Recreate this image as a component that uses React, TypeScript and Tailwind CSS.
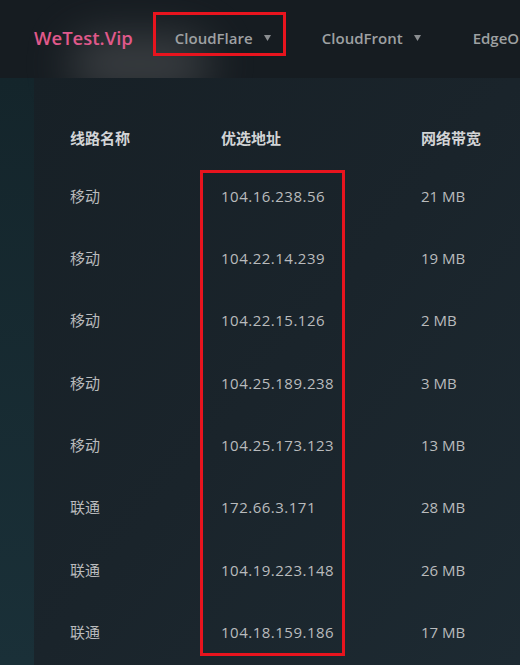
import * as React from 'react';

const rows = [
  { name: '移动', ip: '104.16.238.56', bw: '21 MB' },
  { name: '移动', ip: '104.22.14.239', bw: '19 MB' },
  { name: '移动', ip: '104.22.15.126', bw: '2 MB' },
  { name: '移动', ip: '104.25.189.238', bw: '3 MB' },
  { name: '移动', ip: '104.25.173.123', bw: '13 MB' },
  { name: '联通', ip: '172.66.3.171', bw: '28 MB' },
  { name: '联通', ip: '104.19.223.148', bw: '26 MB' },
  { name: '联通', ip: '104.18.159.186', bw: '17 MB' },
];

const Caret: React.FC = () => (
  <svg width="7" height="6" viewBox="0 0 7 6" className="ml-[11px] shrink-0">
    <path d="M0 0 L7 0 L3.5 6 Z" fill="#8a8d90" />
  </svg>
);

const App: React.FC = () => {
  return (
    <div
      className="w-[520px] h-[665px] overflow-hidden bg-[#161c21] text-[15px]"
      style={{ fontFamily: '"Open Sans", "Noto Sans CJK SC", sans-serif' }}
    >
      <header className="relative h-[78px] flex items-start whitespace-nowrap">
        <div className="absolute left-[70px] top-[36px] w-[140px] h-[56px] rounded-full bg-[#4a4d50] opacity-70 blur-[22px]" />
        <span className="relative shrink-0 ml-[34px] mt-[25px] leading-[26px] text-[18.5px] font-semibold text-[#e0598b]">
          WeTest.Vip
        </span>
        <div className="relative shrink-0 ml-[20px] mt-[12px] w-[133px] h-[44px] border-[3px] border-[#e8141e] flex items-center pl-[19px] pt-[8px]">
          <span className="font-semibold text-[#9ea0a2]">CloudFlare</span>
          <Caret />
        </div>
        <div className="relative shrink-0 ml-[36px] mt-[27px] h-[22px] flex items-center">
          <span className="font-semibold text-[#9ea0a2]">CloudFront</span>
          <Caret />
        </div>
        <span className="relative shrink-0 ml-[52px] mt-[27px] leading-[22px] font-semibold text-[#9ea0a2]">EdgeOne</span>
      </header>

      <div className="flex h-[587px]">
        <div className="w-[34px] shrink-0 bg-gradient-to-b from-[#14252b] to-[#1a3038]" />
        <div className="relative flex-1 bg-gradient-to-br from-[#172026] via-[#1a242b] to-[#1d2a32] pt-[33px] pl-[36px]">
          <div className="flex items-center h-[54px] font-bold text-[#d2d4d6]">
            <div className="w-[151px]">线路名称</div>
            <div className="w-[200px]">优选地址</div>
            <div>网络带宽</div>
          </div>
          {rows.map((r, i) => (
            <div key={i} className="flex items-center h-[62.3px] text-[#b9bbbd]">
              <div className="w-[151px]">{r.name}</div>
              <div className="w-[200px] tracking-[0.5px]">{r.ip}</div>
              <div>{r.bw}</div>
            </div>
          ))}
          <div className="absolute left-[166px] top-[92px] w-[145px] h-[486px] border-[3px] border-[#e8141e]" />
        </div>
      </div>
    </div>
  );
};

export default App;
